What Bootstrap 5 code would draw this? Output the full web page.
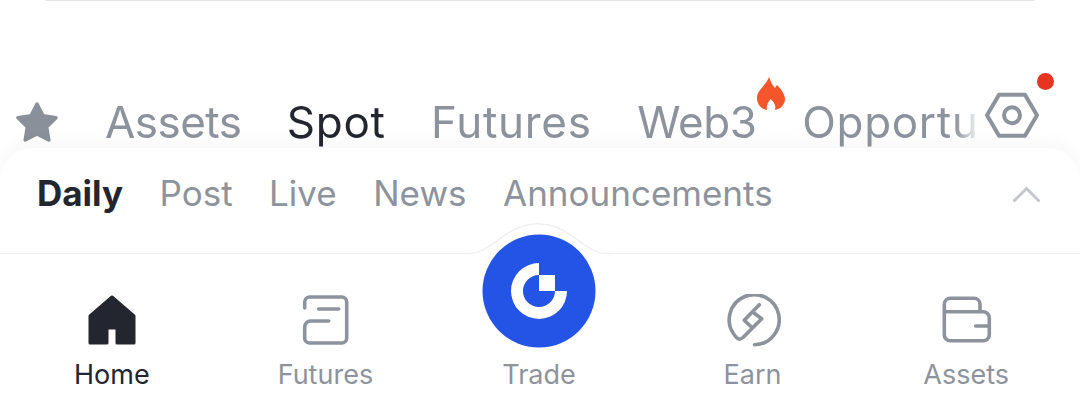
<!DOCTYPE html>
<html lang="en">
<head>
<meta charset="utf-8">
<title>Gate</title>
<link href="https://cdn.jsdelivr.net/npm/bootstrap@5.3.0/dist/css/bootstrap.min.css" rel="stylesheet">
<style>
html,body{height:408px;overflow:hidden;background:#fff;font-family:Inter,"Liberation Sans",sans-serif;}
.page-wrap{width:1080px;height:408px;overflow:hidden;}
.top-rule{height:1px;margin:0 46px;background:#e4e5e7;}
.tab-strip{height:147px;padding:0 0 0 16px;}
.tab-scroller{width:875px;margin-left:45px;margin-right:3px;height:147px;overflow:hidden;white-space:nowrap;gap:45.5px;font-size:44px;color:#8d939c;padding-top:96px;line-height:50px;-webkit-mask-image:linear-gradient(to right,#000 850px,transparent 875px);mask-image:linear-gradient(to right,#000 850px,transparent 875px);}
.tab-scroller .on{color:#23262f;}
.ls-tight{letter-spacing:-.55px;}
.ls-wide{letter-spacing:.7px;}
.ls-web{letter-spacing:-.35px;}
.tab-wrap{position:relative;}
.flame{position:absolute;left:120px;top:-20px;}
.gear-wrap{position:relative;margin-top:86px;}
.red-dot{position:absolute;width:17px;height:17px;border-radius:50%;background:#e5341f;left:54px;top:-14.5px;}
.sheet{height:260px;background:#fff;border-radius:32px 32px 0 0;box-shadow:0 -6px 18px rgba(0,0,0,.035);position:relative;}
.sub-tabs{height:106px;padding:0 40px 14px 37px;border-bottom:1px solid #eef0f1;gap:36.5px;font-size:35px;color:#8d939c;}
.sub-tabs .on{color:#23262f;font-weight:700;}
.chev{margin-left:auto;}
.bump{position:absolute;left:463px;top:72px;}
.bottom-nav{padding:0 5px;}
.nav-cell{width:213.6px;height:153px;position:relative;padding-top:40px;font-size:27px;line-height:32px;color:#8d939c;}
.nav-cell.on{color:#23262f;}
.nav-cell svg{display:block;}
.icon-box{height:52px;margin-bottom:13px;}
.trade-btn{position:absolute;left:50%;margin-left:-57px;top:-20px;}
</style>
</head>
<body>
<div class="page-wrap">
  <div class="top-rule"></div>
  <div class="tab-strip d-flex align-items-start">
    <svg class="flex-shrink-0" style="margin-top:100px" width="44" height="44" viewBox="0 0 44 44"><path d="M21 3 27 14.8 40 16.7 30.6 25.9 32.8 39 21 33 9.200 39 11.400 25.900 2 16.700 15 14.800Z" fill="#8a909a" stroke="#8a909a" stroke-width="3.500" stroke-linejoin="round"/></svg>
    <div class="tab-scroller d-flex flex-shrink-0">
      <span class="ls-tight">Assets</span><span class="on ls-wide">Spot</span><span class="ls-wide">Futures</span>
      <span class="tab-wrap ls-web">Web3<svg class="flame" width="28" height="33" viewBox="0 0 28 33"><path d="M12 0C14 5 15 8 18 11L20 8C25 13 28 18 28 22 28 28 23 32 18 33 19 29 18 26 13.500 22 11 26 9 28 10 33 4 32 0 27 0 21 0 13 9 9 12 0Z" fill="#f4552a"/></svg></span>
      <span class="ls-wide">Opportunities</span>
    </div>
    <div class="gear-wrap flex-shrink-0">
      <svg width="58" height="56" viewBox="0 0 58 56"><path d="M16 7.700H42L54 28.200 42 48.700H16L4 28.200Z" fill="none" stroke="#8d939c" stroke-width="4" stroke-linejoin="round"/><circle cx="29" cy="28.200" r="8" fill="none" stroke="#8d939c" stroke-width="4"/></svg>
      <span class="red-dot"></span>
    </div>
  </div>
  <div class="sheet">
    <div class="sub-tabs d-flex align-items-center">
      <span class="on">Daily</span><span>Post</span><span>Live</span><span>News</span><span>Announcements</span>
      <svg class="chev" width="27" height="16" viewBox="0 0 27 16"><path d="M1.500 14.500 13.500 2.500 25.500 14.500" fill="none" stroke="#c3c6cb" stroke-width="3" stroke-linecap="round"/></svg>
    </div>
    <svg class="bump" width="150" height="36" viewBox="0 0 150 36"><path d="M0 34C18 34 24 28 38 18 62-1 88-1 112 18 126 28 132 34 150 34" fill="#fff" stroke="#eef0f1" stroke-width="1.500"/><rect x="0" y="34.600" width="150" height="1.400" fill="#fff"/></svg>
    <div class="bottom-nav d-flex">
      <div class="nav-cell on text-center">
        <div class="icon-box d-flex justify-content-center"><svg width="50" height="52" viewBox="0 0 50 52"><path d="M25 3 47 22V49H30V34H20V49H3V22Z" fill="#23262f" stroke="#23262f" stroke-width="3" stroke-linejoin="round"/></svg></div>Home
      </div>
      <div class="nav-cell text-center">
        <div class="icon-box d-flex justify-content-center"><svg width="48" height="52" viewBox="-.7 0 48 52"><path d="M3 14V8A5 5 0 0 1 8 3H40A5 5 0 0 1 45 8V44A5 5 0 0 1 40 49H8A5 5 0 0 1 3 44V33A6 6 0 0 1 9 27H27M17 15H37" fill="none" stroke="#8d939c" stroke-width="3.600" stroke-linecap="round"/></svg></div>Futures
      </div>
      <div class="nav-cell text-center">
        <svg class="trade-btn" width="114" height="114" viewBox="-57 -57 114 114"><circle r="56.500" fill="#2354e6"/><path d="M0-28A28 28 0 1 0 28 0H16A16 16 0 1 1 0-16Z" fill="#fff"/><rect x="0" y="-16" width="16" height="16" fill="#fff"/></svg>
        <div class="icon-box"></div>Trade
      </div>
      <div class="nav-cell text-center">
        <div class="icon-box d-flex justify-content-center"><svg width="56" height="56" viewBox="724 294 56 56"><path d="M753.500 344.700A25 25 0 1 0 732.700 334L735 337Q738 341 742 337.500L760.700 318.700 751.700 312M758.300 304.700 743.300 320.300 750.700 327.300" fill="none" stroke="#8d939c" stroke-width="3.600" stroke-linecap="round" stroke-linejoin="round"/></svg></div>Earn
      </div>
      <div class="nav-cell text-center">
        <div class="icon-box d-flex justify-content-center"><svg width="52" height="50" viewBox="940 294 52 50"><path d="M944.300 312V304A6 6 0 0 1 950.300 298.300H974A6 6 0 0 1 980 304V311.700M944.300 311.700H983A6.300 6.300 0 0 1 989.300 318V334.700A6 6 0 0 1 983.300 340.700H950.300A6 6 0 0 1 944.300 334.700ZM989.300 326H975.700" fill="none" stroke="#8d939c" stroke-width="3.600" stroke-linecap="round" stroke-linejoin="round"/></svg></div>Assets
      </div>
    </div>
  </div>
</div>
<script src="https://cdn.jsdelivr.net/npm/bootstrap@5.3.0/dist/js/bootstrap.bundle.min.js"></script>
</body>
</html>
